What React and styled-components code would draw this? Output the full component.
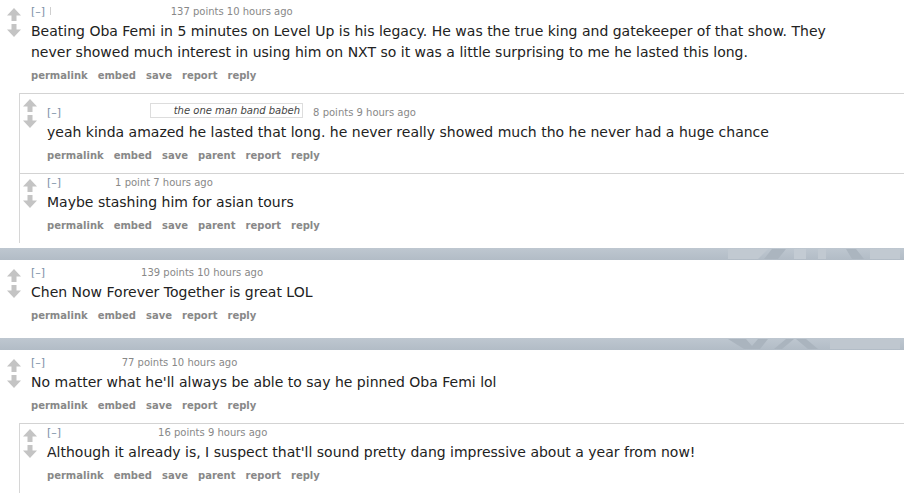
import React from "react";
import styled, { createGlobalStyle } from "styled-components";

const GlobalStyle = createGlobalStyle`
  html, body {
    margin: 0;
    padding: 0;
    background: #fff;
  }
  body {
    font-family: "DejaVu Sans", Verdana, sans-serif;
    overflow: hidden;
  }
`;

const threads = [
  {
    gap: 125.6,
    mark: true,
    points: "137 points 10 hours ago",
    body: "Beating Oba Femi in 5 minutes on Level Up is his legacy. He was the true king and gatekeeper of that show. They never showed much interest in using him on NXT so it was a little surprising to me he lasted this long.",
    children: [
      {
        gap: 89,
        flair: "the one man band babeh",
        points: "8 points 9 hours ago",
        body: "yeah kinda amazed he lasted that long. he never really showed much tho he never had a huge chance",
      },
      {
        gap: 54,
        points: "1 point 7 hours ago",
        body: "Maybe stashing him for asian tours",
      },
    ],
  },
  {
    gap: 96,
    points: "139 points 10 hours ago",
    body: "Chen Now Forever Together is great LOL",
    children: [],
    bar: "a",
  },
  {
    gap: 76.6,
    points: "77 points 10 hours ago",
    body: "No matter what he'll always be able to say he pinned Oba Femi lol",
    bar: "b",
    children: [
      {
        gap: 97,
        points: "16 points 9 hours ago",
        body: "Although it already is, I suspect that'll sound pretty dang impressive about a year from now!",
      },
    ],
  },
];

const Arrow = ({ dir }) => (
  <ArrowSvg viewBox="0 0 14 13" width="14" height="13">
    <path
      d={
        dir === "up"
          ? "M7 0 L14 7.5 L9.5 7.5 L9.5 13 L4.5 13 L4.5 7.5 L0 7.5 Z"
          : "M4.5 0 L9.5 0 L9.5 5.5 L14 5.5 L7 13 L0 5.5 L4.5 5.5 Z"
      }
      fill="#c4c4c4"
    />
  </ArrowSvg>
);

const BarArt = ({ variant }) =>
  variant === "a" ? (
    <svg width="172" height="12" viewBox="0 0 172 12">
      <polygon points="0,1 40,1 30,11 0,11" fill="#c1c9d1" />
      <polygon points="44,1 58,1 50,11 36,11" fill="#abb5bf" />
      <rect x="66" y="1" width="12" height="10" fill="#c3cbd3" />
      <rect x="90" y="1" width="8" height="10" fill="#c1c9d1" />
      <polygon points="118,1 128,1 136,11 124,11" fill="#abb5bf" />
      <rect x="142" y="1" width="30" height="10" fill="#c1c9d1" />
    </svg>
  ) : (
    <svg width="172" height="12" viewBox="0 0 172 12">
      <polygon points="0,1 18,1 24,8 30,1 40,1 32,11 16,11" fill="#aab4be" />
      <polygon points="46,11 58,1 66,1 54,11" fill="#aab4be" />
      <polygon points="68,1 78,1 90,11 80,11" fill="#aab4be" />
      <rect x="102" y="1" width="70" height="10" fill="#bfc7cf" />
    </svg>
  );

const Comment = ({ c, child }) => (
  <Row>
    <Arrows>
      <Arrow dir="up" />
      <Arrow dir="down" />
    </Arrows>
    <Entry>
      <Tagline $pt={c.flair ? 7 : 0}>
        <Expand>[–]</Expand>
        <Author $w={c.gap} $mark={c.mark} />
        {c.flair && <Flair>{c.flair}</Flair>}
        <Score $ml={c.flair ? 10 : 0}>{c.points}</Score>
      </Tagline>
      <Md>{c.body}</Md>
      <Buttons>
        <Btn>permalink</Btn>
        <Btn>embed</Btn>
        <Btn>save</Btn>
        {child && <Btn>parent</Btn>}
        <Btn>report</Btn>
        <Btn>reply</Btn>
      </Buttons>
    </Entry>
  </Row>
);

export default function App() {
  return (
    <Page>
      <GlobalStyle />
      {threads.map((t, i) => (
        <React.Fragment key={i}>
          {t.bar && (
            <Bar>
              <BarArt variant={t.bar} />
            </Bar>
          )}
          <Thread $afterBar={!!t.bar}>
            <Comment c={t} />
            {t.children.length > 0 && (
              <Children>
                {t.children.map((c, j) => (
                  <Child key={j}>
                    <Comment c={c} child />
                  </Child>
                ))}
              </Children>
            )}
          </Thread>
        </React.Fragment>
      ))}
    </Page>
  );
}

const Page = styled.div`
  width: 904px;
  height: 498px;
  overflow: hidden;
  background: #fff;
`;

const Bar = styled.div`
  height: 12px;
  background: linear-gradient(#bec7d0, #b2bcc6);
  display: flex;
  justify-content: flex-end;
  svg {
    margin-right: 4px;
  }
`;

const Thread = styled.div`
  padding: ${(p) => (p.$afterBar ? 6 : 5)}px 0 5px 7px;
`;

const Children = styled.div`
  margin-left: 12px;
  border-left: 1px solid #d6d6d6;
`;

const Child = styled.div`
  border-top: 1px solid #d3d3d3;
  padding-top: 2px;
  padding-left: 3px;
`;

const Row = styled.div`
  display: flex;
  align-items: flex-start;
`;

const Arrows = styled.div`
  width: 14px;
  display: flex;
  flex-direction: column;
  gap: 3px;
  padding-top: 3px;
  margin-right: 10px;
`;

const ArrowSvg = styled.svg`
  display: block;
`;

const Entry = styled.div`
  flex: 1;
  padding-bottom: 10px;
`;

const Tagline = styled.div`
  font-size: 10px;
  line-height: 14px;
  color: #888;
  margin-bottom: 2px;
  padding-top: ${(p) => p.$pt}px;
  white-space: nowrap;
`;

const Expand = styled.span`
  font-size: 11px;
  color: #7b8fa6;
`;

const Author = styled.span`
  display: inline-block;
  width: ${(p) => p.$w}px;
  height: 10px;
  vertical-align: middle;
  position: relative;
  &::before {
    content: "";
    display: ${(p) => (p.$mark ? "block" : "none")};
    position: absolute;
    left: 5px;
    top: 0;
    width: 1px;
    height: 8px;
    background: #cfcfcf;
  }
`;

const Flair = styled.span`
  display: inline-block;
  box-sizing: border-box;
  width: 153px;
  padding: 0 2px;
  border: 1px solid #ddd;
  font-style: italic;
  color: #444;
  text-align: right;
  line-height: 13px;
  vertical-align: 2px;
`;

const Score = styled.span`
  margin-left: ${(p) => p.$ml}px;
`;

const Md = styled.div`
  font-size: 14px;
  line-height: 21px;
  color: #222;
  max-width: 830px;
`;

const Buttons = styled.div`
  display: flex;
  margin-top: 6px;
  font-size: 10px;
  line-height: 14px;
  font-weight: bold;
  color: #888;
`;

const Btn = styled.span`
  margin-right: 10px;
`;
